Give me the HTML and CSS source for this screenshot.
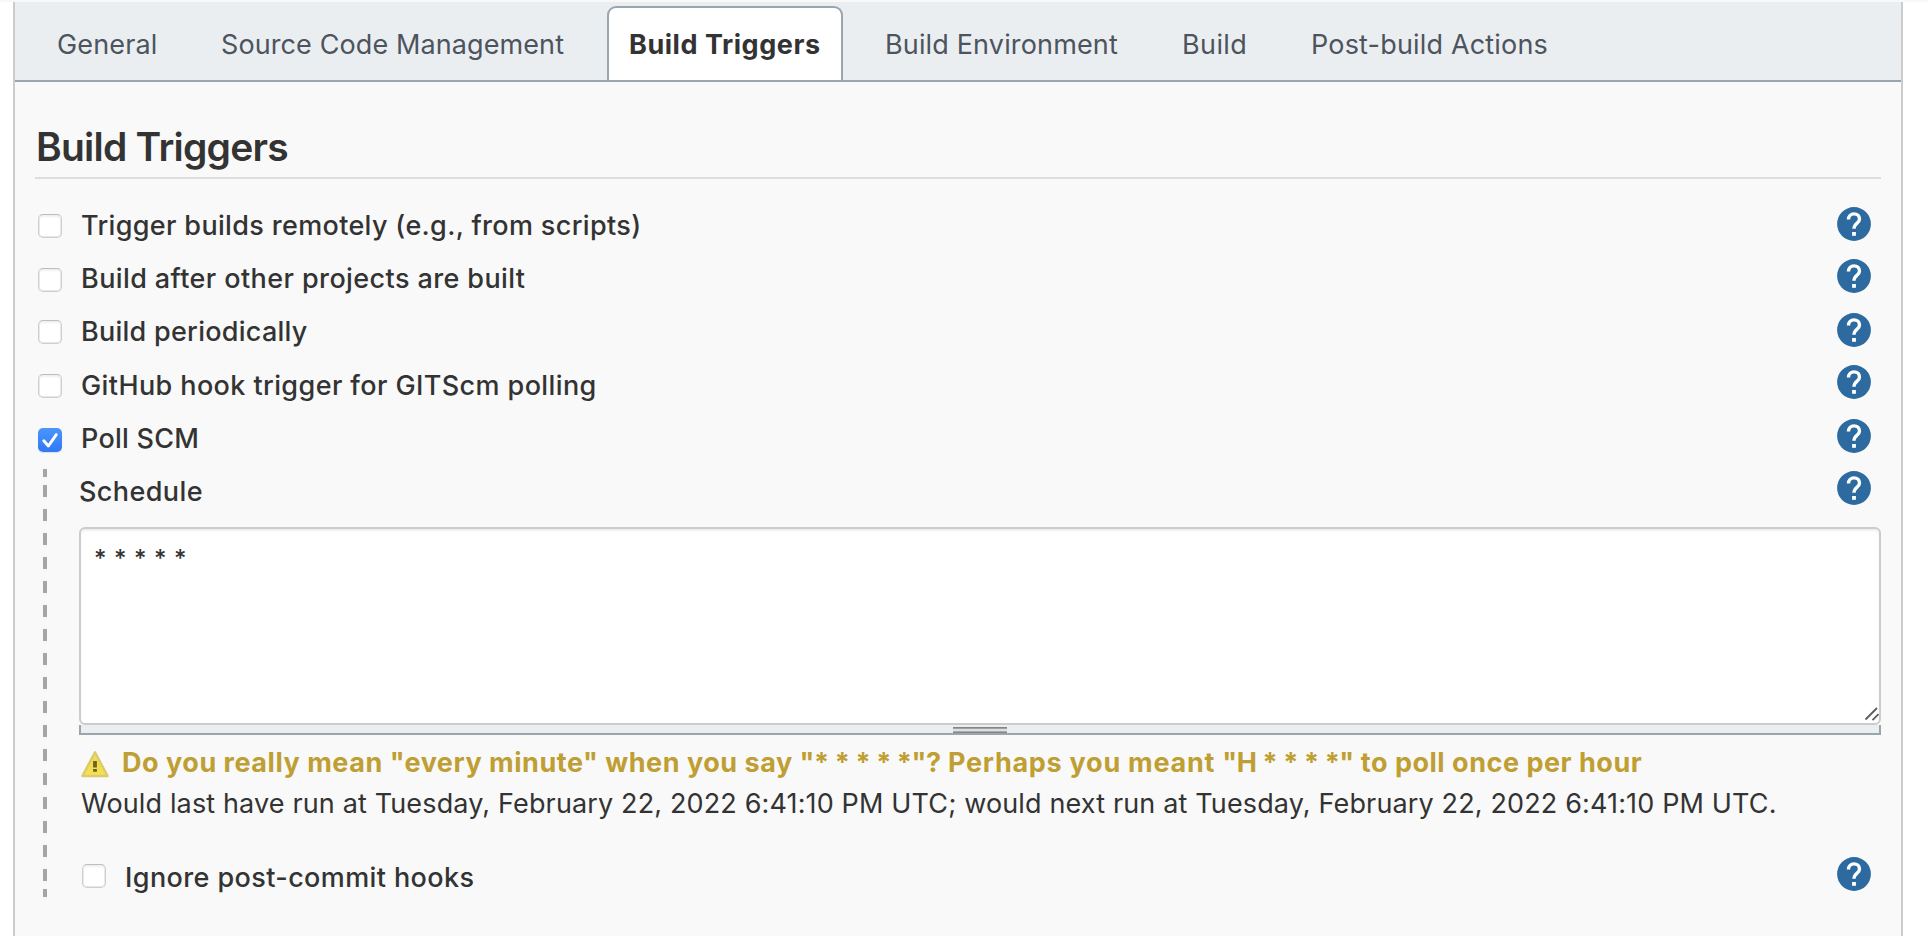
FILE: index.html
```html
<!DOCTYPE html>
<html lang="en">
<head>
<meta charset="utf-8">
<title>Build Triggers</title>
<link rel="stylesheet" href="styles.css">
</head>
<body>
<svg class="defs" aria-hidden="true">
  <symbol id="help" viewBox="0 0 34 34">
    <circle cx="17" cy="17" r="16.9" fill="#2c6a9f"/>
    <path d="M11.5 12.4C11.5 9 13.8 6.9 17 6.9s5.5 2.1 5.5 5.1c0 4.3-5.5 4.4-5.5 9.7" fill="none" stroke="#fff" stroke-width="3.4"/>
    <rect x="15.1" y="25" width="3.8" height="3.8" fill="#fff"/>
  </symbol>
</svg>
<main class="panel">
  <nav class="tabs">
    <a class="tab general">General</a>
    <a class="tab source">Source Code Management</a>
    <a class="tab active">Build Triggers</a>
    <a class="tab environment">Build Environment</a>
    <a class="tab build">Build</a>
    <a class="tab post">Post-build Actions</a>
  </nav>
  <section class="content">
    <h1 class="heading">Build Triggers</h1>
    <div class="rows">
      <div class="row"><span class="check"></span><label class="label remote">Trigger builds remotely (e.g., from scripts)</label><svg class="help"><use href="#help"/></svg></div>
      <div class="row low"><span class="check"></span><label class="label">Build after other projects are built</label><svg class="help"><use href="#help"/></svg></div>
      <div class="row"><span class="check"></span><label class="label periodic">Build periodically</label><svg class="help"><use href="#help"/></svg></div>
      <div class="row low tall"><span class="check"></span><label class="label">GitHub hook trigger for GITScm polling</label><svg class="help"><use href="#help"/></svg></div>
      <div class="row low"><span class="check checked"><svg class="tick" viewBox="0 0 24 24"><path d="M5.8 12.8l4.6 5.2L18.3 6.6" fill="none" stroke="#fff" stroke-width="2.9" stroke-linecap="round" stroke-linejoin="round"/></svg></span><label class="label periodic">Poll SCM</label><svg class="help"><use href="#help"/></svg></div>
    </div>
    <div class="nested">
      <div class="rail"></div>
      <div class="fields">
        <div class="schedule"><label class="label">Schedule</label><svg class="help"><use href="#help"/></svg></div>
        <div class="editor">
          <textarea class="cron" spellcheck="false">* * * * *</textarea>
          <svg class="corner" viewBox="0 0 16 16"><path d="M1.5 12.5L13 1M8.5 13.2l6-6" stroke="#5c5c5c" stroke-width="1.8" fill="none"/></svg>
        </div>
        <div class="handle"><span class="grip"></span></div>
        <div class="warning">
          <svg class="alert" viewBox="0 0 30 28">
            <defs><linearGradient id="amber" x1="0" y1="0" x2="0" y2="1"><stop offset="0" stop-color="#ecdc6c"/><stop offset=".55" stop-color="#f2dd4c"/><stop offset="1" stop-color="#f6e05a"/></linearGradient></defs>
            <path d="M15 2.2L27.6 26H2.4Z" fill="url(#amber)" stroke="#dccb6c" stroke-width="2.4" stroke-linejoin="round"/>
            <path d="M13.1 11h3.8v6.4h-3.8zM13.1 19h3.8v2.8h-3.8z" fill="#6b6425"/>
          </svg>
          <span class="message">Do you really mean "every minute" when you say <span class="pattern">"* * * * *"?</span><span class="hint"> Perhaps you meant </span><span class="pattern">"H * * * *"</span> to poll once per hour</span>
        </div>
        <div class="next-run">Would last have run at Tuesday, February 22, 2022 6:41:10 PM UTC; would next run at Tuesday, February 22, 2022 6:41:10 PM UTC.</div>
        <div class="ignore"><span class="check"></span><label class="label">Ignore post-commit hooks</label><svg class="help"><use href="#help"/></svg></div>
      </div>
    </div>
  </section>
</main>
</body>
</html>
```
FILE: styles.css
```css
* { box-sizing: border-box; }

body {
  margin: 0;
  height: 936px;
  overflow: hidden;
  background: #fff;
  border-top: 2px solid #f8f8f8;
  color: #333;
  font: 27px/32px Inter, "Liberation Sans", sans-serif;
}

.defs { display: none; }

.panel {
  height: 934px;
  margin: 0 25px 0 13px;
  border: solid #ccc;
  border-width: 0 2px;
  background: #f9f9f9;
}

.tabs {
  display: grid;
  grid-template-columns: 164px 408px 256px 297px 129px auto;
  height: 80px;
  padding: 4px 0 0 20px;
  background: #eaeef1;
  border-bottom: 2px solid #9aa6ae;
}

.tab {
  height: 74px;
  padding: 23px 0 0 22px;
  color: #4d545d;
  white-space: nowrap;
}

.general { letter-spacing: 0.14px; }
.source { letter-spacing: 0.1px; }
.environment { letter-spacing: 0.15px; }
.build { letter-spacing: 0.4px; }
.post { letter-spacing: 0.18px; }

.active {
  width: 236px;
  padding: 21px 0 0 20px;
  background: #fff;
  border: 2px solid #9aa6ae;
  border-bottom: 0;
  border-radius: 9px 9px 0 0;
  color: #333;
  font-weight: 700;
  letter-spacing: 0.54px;
}

.content { padding: 0 20px; }

.heading {
  height: 97px;
  margin: 0;
  padding: 43px 0 0 1px;
  border-bottom: 2px solid #dedede;
  font-size: 39px;
  font-weight: 600;
  line-height: 44px;
  letter-spacing: -0.76px;
}

.rows { padding-top: 21px; }

.row {
  display: grid;
  grid-template-columns: 45px 1fr 34px;
  height: 53px;
  padding: 0 10px 0 3px;
  align-items: start;
}

.tall { height: 54px; }

.label {
  padding-top: 10px;
  font-weight: 500;
  letter-spacing: 0.4px;
}

.row .label { margin-left: -2px; }
.tall .label { padding-top: 11px; }
.remote { letter-spacing: 0.34px; }
.periodic { letter-spacing: 0.26px; }

.help {
  display: block;
  width: 34px;
  height: 34px;
  margin-top: 7px;
}

.low .help { margin-top: 6px; }

.check {
  width: 24px;
  height: 24px;
  margin-top: 14px;
  background: #fff;
  border: 1.5px solid #cfcfcf;
  border-top-color: #bdbdbd;
  border-radius: 5px;
  box-shadow: inset 0 2px 2px #f1f1f1, inset 0 0 0 1px #e6e6e6;
}

.low .check { margin-top: 15px; }

.check.checked {
  border: 0;
  background: linear-gradient(#4a96fb, #2f79f6);
  box-shadow: 0 1px 1px #d5e2f5;
}

.tick { display: block; width: 24px; height: 24px; }

.nested {
  display: grid;
  grid-template-columns: 44px 1fr;
}

.rail {
  width: 4px;
  height: 428px;
  margin: 3px 0 0 8px;
  background:
    linear-gradient(#a5a5a5, #a5a5a5) 0 0 / 4px 8px no-repeat,
    linear-gradient(#a5a5a5, #a5a5a5) 0 100% / 4px 8px no-repeat,
    repeating-linear-gradient(#a5a5a5 0 12px, transparent 12px 24px) 0 16px / 4px 396px no-repeat;
}

.schedule {
  display: flex;
  justify-content: space-between;
  align-items: flex-start;
  height: 61px;
  padding-right: 10px;
}

.schedule .help { margin-top: 5px; }

.editor {
  position: relative;
  height: 198px;
}

.cron {
  display: block;
  width: 100%;
  height: 198px;
  margin: 0;
  padding: 14px 13px;
  resize: none;
  overflow: hidden;
  outline: 0;
  background: #fff;
  border: 2px solid #ccc;
  border-radius: 6px;
  box-shadow: inset 0 2px 2px #eee;
  color: #333;
  font: inherit;
  font-size: 24px;
  font-weight: 500;
  letter-spacing: 0.55px;
}

.corner {
  position: absolute;
  right: 1px;
  bottom: 2px;
  width: 16px;
  height: 16px;
}

.handle {
  display: flex;
  justify-content: center;
  height: 10px;
  padding-top: 2px;
  background: #eaeef1;
  border: solid #9aa6ae;
  border-width: 0 2px 2px;
}

.grip {
  width: 54px;
  height: 6px;
  background: linear-gradient(#858585 0 1px, #a0a0a0 1px 2px, #dedede 2px 4px, #ababab 4px 5px, #858585 5px);
}

.warning {
  display: flex;
  height: 41px;
  padding-top: 12px;
  color: #bf9f33;
  font-weight: 700;
  letter-spacing: 0.52px;
  white-space: nowrap;
}

.pattern { letter-spacing: -0.4px; }
.hint { letter-spacing: 0.74px; }

.alert { width: 30px; height: 28px; margin: 3px 12px 0 1px; }

.next-run {
  padding: 12px 0 0 2px;
  letter-spacing: 0.142px;
  white-space: nowrap;
}

.ignore {
  display: grid;
  grid-template-columns: 43px 1fr 34px;
  margin-top: 30px;
  padding: 0 10px 0 3px;
  align-items: start;
}

.ignore .label { padding-top: 12px; }
```
